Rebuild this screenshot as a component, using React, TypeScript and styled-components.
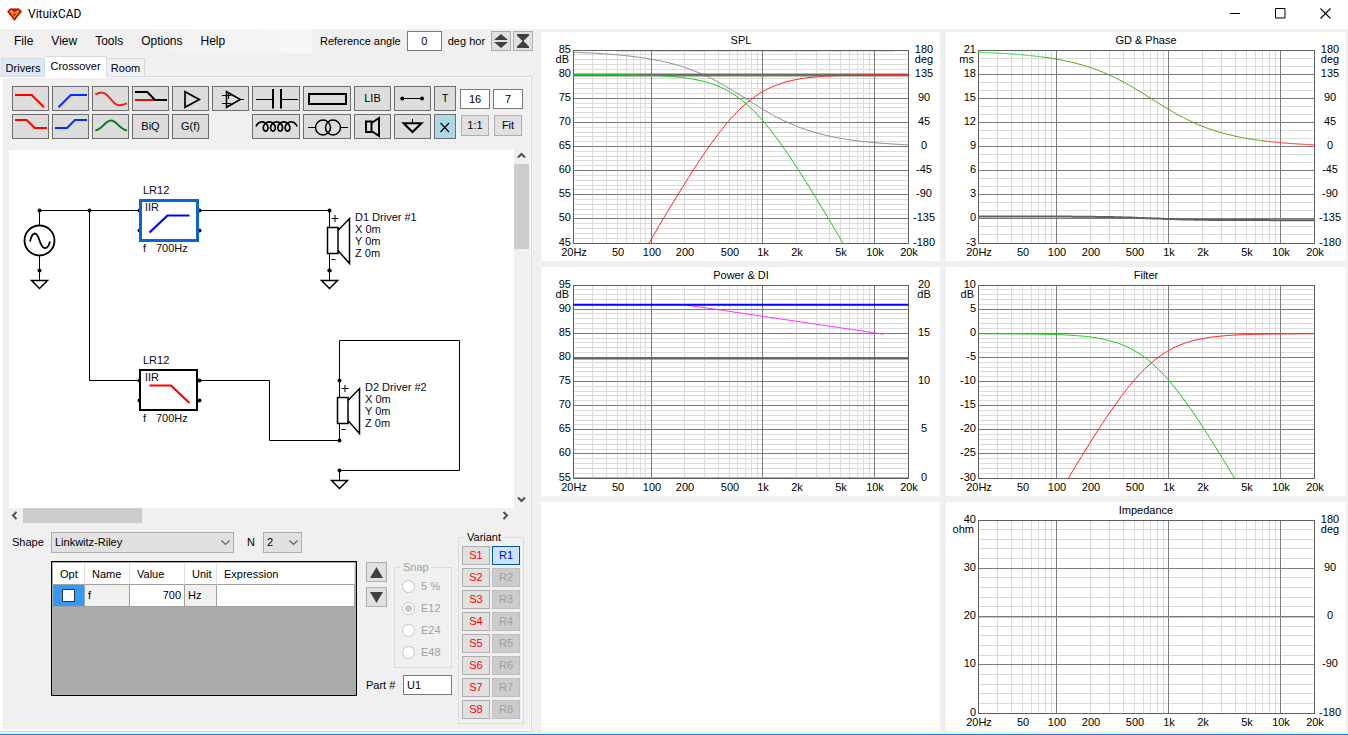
import React, { useLayoutEffect, useRef, useState } from "react";
import styled, { createGlobalStyle, css } from "styled-components";

const GlobalStyle = createGlobalStyle`
  *, *::before, *::after { box-sizing: border-box; }
  body {
    margin: 0;
    background: #f0f0f0;
    color: #000;
    font: 11px/13px "Liberation Sans", Arial, sans-serif;
  }
  button, input, select { font: inherit; color: inherit; margin: 0; }
`;

/* ---------- window frame ---------- */

const Window = styled.div`
  display: flex;
  flex-direction: column;
  height: 100vh;
  min-height: 720px;
  border-bottom: 1px solid #1979ca;
`;

const TitleBar = styled.header`
  display: flex;
  align-items: center;
  flex: none;
  height: 29px;
  padding-left: 7px;
  background: #fff;
`;

const Title = styled.h1`
  flex: 1;
  margin: 0;
  padding: 0 0 2px 6px;
  font: 400 12px/16px Roboto, sans-serif;
`;

const WindowButton = styled.button`
  display: grid;
  place-items: center;
  width: 45px;
  height: 29px;
  padding: 0 0 3px;
  border: 0;
  background: none;
`;

const Body = styled.main`
  display: flex;
  flex: 1;
  min-height: 0;
`;

const Editor = styled.section`
  display: flex;
  flex-direction: column;
  flex: none;
  width: 541px;
  padding: 0 9px 2px 0;
`;

const TopRow = styled.div`
  display: flex;
  align-items: center;
  height: 24px;
`;

const Menu = styled.nav`
  display: flex;
  align-items: center;
  flex: none;
  width: 312px;
  height: 24px;
  padding-left: 5px;
  background: linear-gradient(90deg, #f0f0f0, #f1f1f1 45%, #f7f7f7);
`;

const MenuItem = styled.button`
  padding: 0 9px;
  border: 0;
  background: none;
  font-size: 12px;
  line-height: 16px;
`;

const AngleGroup = styled.div`
  display: flex;
  align-items: center;
  gap: 6px;
  flex: 1;
  padding-left: 8px;
  white-space: nowrap;
`;

const AngleButtons = styled.div`
  display: flex;
  gap: 2px;
  margin-left: auto;
`;

const TextBox = styled.input<{ $w: number; $center?: boolean }>`
  flex: none;
  width: ${(p) => p.$w}px;
  height: 20px;
  padding: 0 3px;
  border: 1px solid #7a7a7a;
  border-radius: 0;
  background: #fff;
  text-align: ${(p) => (p.$center ? "center" : "left")};
`;

const PlainButton = styled.button<{ $w?: number; $h?: number }>`
  display: grid;
  place-items: center;
  width: ${(p) => p.$w ?? 20}px;
  height: ${(p) => p.$h ?? 20}px;
  padding: 0;
  border: 1px solid #adadad;
  background: #e1e1e1;
`;

/* ---------- tabs ---------- */

const Tabs = styled.div`
  display: flex;
  align-items: flex-end;
  height: 23px;
  padding-left: 1px;
`;

const Tab = styled.button<{ $w: number; $active?: boolean; $hot?: boolean }>`
  width: ${(p) => p.$w}px;
  height: 18px;
  padding: 2px 0 0;
  border: 1px solid #d9d9d9;
  border-bottom: 0;
  background: ${(p) => (p.$hot ? "#d8eaf9" : "#f0f0f0")};
  & + & { border-left: 0; }
  ${(p) =>
    p.$active &&
    css`
      height: 21px;
      padding: 0 0 1px;
      margin-bottom: -1px;
      background: #fff;
      z-index: 1;
    `}
`;

const TabPage = styled.div`
  display: flex;
  flex: 1;
  min-height: 0;
  border: 1px solid #dcdcdc;
  border-left: 0;
  padding: 1px 1px 2px 3px;
  background: #fff;
`;

const TabBody = styled.div`
  display: flex;
  flex-direction: column;
  flex: 1;
  min-width: 0;
  padding: 8px 0 5px;
  background: #f0f0f0;
`;

/* ---------- toolbar ---------- */

const Toolbar = styled.div`
  display: flex;
  gap: 3px;
  padding-left: 9px;
`;

const ToolGrid = styled.div`
  display: grid;
  grid-template-columns: repeat(6, 37px) 48px 48px 37px 37px 22px;
  grid-template-rows: 25px 25px;
  gap: 3px;
`;

const ToolButton = styled.button<{ $on?: boolean }>`
  display: grid;
  place-items: center;
  padding: 0;
  border: 1px solid #6e6e6e;
  background: ${(p) => (p.$on ? "#add8e6" : "#dddddd")};
`;

const ZoomGrid = styled.div`
  display: grid;
  grid-template-columns: 30px 30px;
  gap: 6px 3px;
  justify-items: center;
  align-content: start;
  padding: 3px 0 0 1px;
`;

const Svg: React.FC<{ w: number; h?: number; children: React.ReactNode }> = ({ w, h = 23, children }) => (
  <svg width={w} height={h} viewBox={`0 0 ${w} ${h}`} fill="none" stroke="#000" strokeWidth="2" aria-hidden="true">
    {children}
  </svg>
);

const coil = Array.from({ length: 137 }, (_, i) => {
  const t = -Math.PI / 2 + (i / 136) * 9 * Math.PI;
  return `${(9 + 1.16 * t + 4 * Math.sin(t)).toFixed(2)},${(11.5 - 4.6 * Math.cos(t)).toFixed(2)}`;
}).join(" ");

const tools: { name: string; icon: React.ReactNode; on?: boolean; blank?: boolean }[] = [
  { name: "Low pass", icon: <Svg w={35}><path d="M2 8H18.7L31 20.3" stroke="#f00" /></Svg> },
  { name: "High pass", icon: <Svg w={35}><path d="M5.5 20.3L17.7 8H34" stroke="#0030ff" /></Svg> },
  { name: "Shelf", icon: <Svg w={35}><path d="M2.3 7.6C7 4.5 11 5 14 8C18 12 21 17.5 25 18.2C28 18.6 31 17.6 34 16.4" stroke="#f02020" /></Svg> },
  { name: "Shelving low", icon: <Svg w={35}><path d="M2 13H22" stroke="#f00" /><path d="M2 5H14.3L22 13H34" /></Svg> },
  { name: "Buffer", icon: <Svg w={35}><path d="M12 4.7V20.3L26.3 12.5Z" strokeWidth="1.7" /></Svg> },
  { name: "Op-amp", icon: <Svg w={35}><path d="M13.5 4.7V20.3L27.3 12.5Z" strokeWidth="1.6" /><path d="M9 8.5H18M15.5 6V12M9 16.5H18M27 12.5H31" strokeWidth="1" /></Svg> },
  { name: "Capacitor", icon: <Svg w={46}><path d="M3 12.5H20M28 12.5H45" strokeWidth="1" /><path d="M20 2V21.5M28 2V21.5" /></Svg> },
  { name: "Resistor", icon: <Svg w={46}><path d="M5 7H42V17H5Z" /></Svg> },
  { name: "Library", icon: "LIB" },
  { name: "Wire", icon: <Svg w={35}><path d="M7 11.5H27" strokeWidth="1" /><circle cx="7.3" cy="11.5" r="2" fill="#000" stroke="none" /><circle cx="27" cy="11.5" r="2" fill="#000" stroke="none" /></Svg> },
  { name: "Text", icon: "T" },
  { name: "Step low", icon: <Svg w={35}><path d="M2 5H13.7L21.7 13H34" stroke="#f00" /></Svg> },
  { name: "Step high", icon: <Svg w={35}><path d="M2 13H14L22 5H34" stroke="#0030ff" /></Svg> },
  { name: "Peak", icon: <Svg w={35}><path d="M2.3 15.5C10 14 12 5.6 18 5.6S26 14 34 15.5" stroke="#0a7a1e" /></Svg> },
  { name: "Biquad", icon: "BiQ" },
  { name: "Transfer function", icon: "G(f)" },
  { name: "", icon: null, blank: true },
  { name: "Inductor", icon: <Svg w={46}><polyline points={coil} strokeWidth="1.7" /></Svg> },
  { name: "Transformer", icon: <Svg w={46}><circle cx="19" cy="12.5" r="7.5" strokeWidth="1.5" /><circle cx="29" cy="12.5" r="7.5" strokeWidth="1.5" /><path d="M4 12.5H11.5M36.5 12.5H44" strokeWidth="1" /></Svg> },
  { name: "Driver", icon: <Svg w={35}><path d="M11 6.5H16.5V17H11ZM16.5 8L24 3V21L16.5 16" /></Svg> },
  { name: "Ground", icon: <Svg w={35}><path d="M17.5 4V8" strokeWidth="1" /><path d="M8.5 8.2H26.5L17.5 17Z" /></Svg> },
  { name: "Delete", icon: <Svg w={20}><path d="M5.5 8L14 17M14 8L5.5 17" strokeWidth="1.1" /></Svg>, on: true },
];

/* ---------- schematic ---------- */

const CanvasArea = styled.div`
  display: grid;
  grid-template-columns: minmax(0, 1fr) 16px;
  grid-template-rows: minmax(0, 1fr) 16px;
  flex: 1;
  min-height: 0;
  padding: 8px 0 0 3px;
`;

const Canvas = styled.div`
  margin: 3px 0 0 3px;
  overflow: hidden;
  background: #fff;
`;

const VBar = styled.div`
  display: flex;
  flex-direction: column;
  width: 15px;
`;

const HBar = styled.div`
  display: flex;
  height: 15px;
`;

const ArrowButton = styled.button`
  display: grid;
  place-items: center;
  flex: none;
  width: 17px;
  height: 17px;
  padding: 0;
  border: 0;
  background: none;
  ${VBar} & { width: 15px; }
  ${HBar} & { height: 15px; }
`;

const Track = styled.div`
  display: flex;
  flex: 1;
`;

const Thumb = styled.div<{ $vertical?: boolean }>`
  background: #cdcdcd;
  width: ${(p) => (p.$vertical ? "15px" : "25%")};
  height: ${(p) => (p.$vertical ? "26%" : "15px")};
`;

const Chevron: React.FC<{ dir: "up" | "down" | "left" | "right"; thin?: boolean }> = ({ dir, thin }) => {
  const turn = { down: 0, left: 90, up: 180, right: 270 }[dir];
  return (
    <svg width="11" height="11" viewBox="-5.5 -5.5 11 11" fill="none" stroke={thin ? "#606060" : "#505050"} strokeWidth={thin ? 1.2 : 2} aria-hidden="true">
      <path d={thin ? "M-4 -2L0 2L4 -2" : "M-3.5 -2L0 1.5L3.5 -2"} transform={`rotate(${turn})`} />
    </svg>
  );
};

const SchematicText = styled.text`
  font: 11px "Liberation Sans", Arial, sans-serif;
  fill: #0a0a14;
  stroke: none;
`;

const Dot: React.FC<{ x: number; y: number }> = ({ x, y }) => <circle cx={x} cy={y} r="2" fill="#000" stroke="none" />;

const Ground: React.FC<{ x: number; y: number }> = ({ x, y }) => (
  <g transform={`translate(${x} ${y})`}>
    <path d="M0 0V10" />
    <path d="M-8 10H8L0 18Z" strokeWidth="1.5" fill="#fff" />
    <Dot x={0} y={0} />
  </g>
);

const Speaker: React.FC<{ x: number; y: number; label: string }> = ({ x, y, label }) => (
  <g transform={`translate(${x} ${y})`}>
    <path d="M0 0V17M0 43V60" />
    <path d="M-2 17H8.5V43H-2ZM8.5 20L20 8V53L8.5 40" strokeWidth="1.5" fill="#fff" />
    <path d="M2 8H9M5.500 4.500V11.500M2 49H6" />
    <Dot x={0} y={0} />
    <Dot x={0} y={60} />
    {[label, "X 0m", "Y 0m", "Z 0m"].map((t, i) => (
      <SchematicText key={t} x={25.5} y={10.5 + i * 12}>{t}</SchematicText>
    ))}
  </g>
);

const FilterBlock: React.FC<{ y: number; selected?: boolean; curve: string; color: string }> = ({ y, selected, curve, color }) => (
  <g transform={`translate(130 ${y})`}>
    {[0, 20].map((p) => (
      <g key={p}>
        <Dot x={0} y={p} />
        <Dot x={60} y={p} />
      </g>
    ))}
    <rect x={selected ? 1 : 0.5} y={selected ? -10 : -10.5} width="57" height="40" fill="#fff" stroke={selected ? "#0a66cc" : "#000"} strokeWidth={selected ? 3 : 2} />
    <path d={curve} stroke={color} strokeWidth="2.2" />
    <SchematicText x={3.5} y={-16.5}>LR12</SchematicText>
    <SchematicText x={5.5} y={0.5}>IIR</SchematicText>
    <SchematicText x={3.5} y={41.5}>f</SchematicText>
    <SchematicText x={16.5} y={41.5}>700Hz</SchematicText>
  </g>
);

const Schematic = () => (
  <svg width="505" height="358" fill="none" stroke="#000" role="img" aria-label="Crossover schematic">
    <g transform="translate(.5 .5)">
      <path d="M30 75V60H130M80 60V230H130M190 60H320M190 230H260V290H330M330 230V190H450V320H330M30 105V120" />
      <circle cx="30" cy="90" r="15" strokeWidth="1.8" />
      <path d="M20.5 91C23 80.5 27 80.5 30 90S38 100.5 40.5 91" strokeWidth="1.8" />
      <Dot x={30} y={60} />
      <Dot x={80} y={60} />
      <FilterBlock y={60} selected curve="M10 22L28 5H50" color="#0000ff" />
      <FilterBlock y={230} curve="M10 5H31.5L50 22.5" color="#ff0000" />
      <Speaker x={320} y={60} label="D1 Driver #1" />
      <Speaker x={330} y={230} label="D2 Driver #2" />
      <Ground x={30} y={120} />
      <Ground x={320} y={120} />
      <Ground x={330} y={320} />
    </g>
  </svg>
);

/* ---------- part parameters ---------- */

const Lower = styled.div`
  display: flex;
  align-items: flex-start;
  flex: none;
  padding-left: 9px;
`;

const ParamBlock = styled.div`
  display: flex;
  flex-direction: column;
  gap: 8px;
  padding-top: 8px;
`;

const ShapeRow = styled.div`
  display: flex;
  align-items: center;
`;

const FieldLabel = styled.label<{ $w: number; $indent?: number }>`
  flex: none;
  width: ${(p) => p.$w}px;
  padding-left: ${(p) => p.$indent ?? 0}px;
`;

const SelectWrap = styled.div<{ $w: number }>`
  position: relative;
  width: ${(p) => p.$w}px;
  svg {
    position: absolute;
    top: 5px;
    right: 3px;
    pointer-events: none;
  }
`;

const Select = styled.select`
  appearance: none;
  display: block;
  width: 100%;
  height: 21px;
  padding: 0 3px;
  border: 1px solid #adadad;
  border-radius: 0;
  background: #e1e1e1;
`;

const GridBox = styled.div`
  width: 306px;
  height: 135px;
  margin-left: 39px;
  padding: 1px;
  border: 1px solid #000;
  background: #ababab;
`;

const ParamTable = styled.table`
  width: 100%;
  table-layout: fixed;
  border-collapse: separate;
  border-spacing: 0;
  th, td {
    height: 22px;
    padding: 0 3px;
    border-right: 1px solid #a0a0a0;
    border-bottom: 1px solid #a0a0a0;
    background: #fff;
    font-weight: 400;
    text-align: left;
  }
  th { padding: 2px 0 0 7px; border-right-color: #e0e0e0; }
`;

const Cell = styled.td<{ $kind?: "check" | "fixed" | "number" }>`
  && {
    ${(p) => p.$kind === "check" && "background: #3399ff; text-align: center; line-height: 0;"}
    ${(p) => p.$kind === "fixed" && "background: #f0f0f0;"}
    ${(p) => p.$kind === "number" && "text-align: right;"}
  }
`;

const CheckBox = styled.input`
  appearance: none;
  width: 13px;
  height: 13px;
  border: 1px solid #333;
  background: #fff;
`;

const MiddleBlock = styled.div`
  width: 86px;
  margin: 37px 6px 0 9px;
`;

const MiddleRow = styled.div`
  display: flex;
  justify-content: space-between;
  align-items: flex-start;
`;

const ArrowColumn = styled.div`
  display: grid;
  gap: 5px;
  padding-top: 1px;
`;

const Group = styled.fieldset<{ $w: number }>`
  width: ${(p) => p.$w}px;
  min-width: 0;
  margin: 0;
  padding: 0 3px 4px;
  border: 1px solid #dcdcdc;
  legend { margin-left: 3px; padding: 0 2px; }
  &:disabled { color: #a0a0a0; }
`;

const RadioLabel = styled.label`
  display: flex;
  align-items: center;
  gap: 6px;
  height: 22px;
  padding-left: 4px;
`;

const Radio = styled.input`
  appearance: none;
  flex: none;
  width: 13px;
  height: 13px;
  border: 1px solid #c4c4c4;
  border-radius: 50%;
  background: #fff;
  &:checked { background: radial-gradient(circle, #c8c8c8 3px, #fff 4px); }
`;

const SnapList = styled.div`
  padding-top: 1px;
`;

const PartRow = styled.div`
  display: flex;
  align-items: center;
  margin-top: 7px;
`;

const VariantBlock = styled.div`
  padding-top: 7px;
`;

const VariantGrid = styled.div`
  display: grid;
  grid-template-columns: 28px 28px;
  gap: 3px 2px;
  padding-top: 2px;
`;

const VariantButton = styled.button<{ $tone: "save" | "current" | "off" }>`
  height: 19px;
  padding: 0;
  border: 1px solid;
  line-height: 15px;
  ${(p) =>
    ({
      save: "color: #ff0000; background: #e1e1e1; border-color: #adadad;",
      current: "color: #0000ff; background: #cce4f7; border-color: #005499;",
      off: "color: #a0a0a0; background: #cccccc; border-color: #bfbfbf;",
    })[p.$tone]}
`;

/* ---------- charts ---------- */

const ChartGrid = styled.section`
  display: grid;
  grid-template-columns: minmax(0, 399fr) minmax(0, 400fr);
  grid-template-rows: repeat(3, minmax(0, 1fr));
  gap: 6px;
  flex: 1;
  min-width: 0;
  padding: 3px 2px 3px 0;
`;

const ChartPanel = styled.div`
  overflow: hidden;
  background: #fff;
`;

const ChartText = styled.text`
  font: 11px "Liberation Sans", Arial, sans-serif;
  fill: #000;
`;

type Axis = { max: number; min: number; step: number; unit: string; minor?: number };
type Curve = {
  fn: (f: number) => number;
  color: string;
  width?: number;
  right?: boolean;
  from?: number;
  to?: number;
  opacity?: number;
};
type ChartSpec = { title: string; left: Axis; right?: Axis; curves: Curve[] };

const FC = 700;
const lowPass = (f: number) => -20 * Math.log10(1 + (f / FC) ** 2);
const highPass = (f: number) => lowPass(f) + 40 * Math.log10(f / FC);
const phase = (f: number) => 180 - (360 / Math.PI) * Math.atan(f / FC);

const degrees = (step: number): Axis => ({ max: 180, min: -180, step, unit: "deg" });

const charts: (ChartSpec | null)[] = [
  {
    title: "SPL",
    left: { max: 85, min: 45, step: 5, minor: 1, unit: "dB" },
    right: degrees(45),
    curves: [
      { fn: () => 84.8, color: "#ff60e0", from: 50, to: 15000, opacity: 0.3 },
      { fn: phase, color: "#8c8c8c", right: true },
      { fn: () => 79.9, color: "#5f6b55", width: 3, opacity: 0.9 },
      { fn: (f) => 80 + lowPass(f), color: "#10d010" },
      { fn: (f) => 80 + highPass(f), color: "#ff2020" },
    ],
  },
  {
    title: "GD & Phase",
    left: { max: 21, min: -3, step: 3, minor: 1, unit: "ms" },
    right: degrees(45),
    curves: [
      { fn: (f) => 0.455 / (1 + (f / FC) ** 2) - 0.1, color: "#606060", width: 2 },
      { fn: phase, color: "#ff1010", right: true, from: 7000 },
      { fn: phase, color: "#10d020", right: true, to: 75 },
      { fn: phase, color: "#50a010", right: true, from: 75, to: 7000 },
    ],
  },
  {
    title: "Power & DI",
    left: { max: 95, min: 55, step: 5, minor: 1, unit: "dB" },
    right: { max: 20, min: 0, step: 5, unit: "dB" },
    curves: [
      { fn: () => 79.9, color: "#606060", width: 2 },
      { fn: () => 55.2, color: "#ff8080" },
      { fn: (f) => 91 - (6.1 * Math.log10(f / 200)) / Math.log10(60), color: "#ff20ff", from: 200, to: 12000 },
      { fn: () => 91, color: "#0000ff", width: 2 },
    ],
  },
  {
    title: "Filter",
    left: { max: 10, min: -30, step: 5, minor: 1, unit: "dB" },
    curves: [
      { fn: lowPass, color: "#10d010" },
      { fn: highPass, color: "#ff2020" },
    ],
  },
  null,
  {
    title: "Impedance",
    left: { max: 40, min: 0, step: 10, minor: 2, unit: "ohm" },
    right: degrees(90),
    curves: [{ fn: () => 19.9, color: "#b08c8c", opacity: 0.6 }],
  },
];

const freqLabels: [number, string][] = [
  [20, "20Hz"], [50, "50"], [100, "100"], [200, "200"], [500, "500"],
  [1000, "1k"], [2000, "2k"], [5000, "5k"], [10000, "10k"], [20000, "20k"],
];

const freqLines = [10, 100, 1000, 10000]
  .flatMap((d) => [1, 2, 3, 4, 5, 6, 7, 8, 9].map((n) => n * d))
  .filter((f) => f > 20 && f < 20000);

const ticks = (a: Axis, step: number) =>
  Array.from({ length: Math.round((a.max - a.min) / step) + 1 }, (_, i) => a.max - i * step);

const ChartDrawing: React.FC<{ spec: ChartSpec; w: number; h: number; id: string }> = ({ spec, w, h, id }) => {
  const x0 = 32;
  const x1 = w - 32;
  const y0 = 18;
  const y1 = h - 18;
  const x = (f: number) => x0 + ((x1 - x0) * Math.log10(f / 20)) / 3;
  const y = (v: number, a: Axis) => y0 + ((y1 - y0) * (a.max - v)) / (a.max - a.min);
  const crisp = (v: number) => Math.floor(v + 0.01) + 0.5;
  const { left, right } = spec;
  const isMajor = (f: number) => [100, 1000, 10000].includes(f);

  return (
    <svg width={w} height={h} display="block" role="img" aria-label={spec.title}>
      <clipPath id={id}>
        <rect x={x0} y={y0} width={x1 - x0 + 1} height={y1 - y0 + 1} />
      </clipPath>
      <g fill="none" stroke="#dcdcdc">
        {ticks(left, left.minor ?? left.step).map((v) => (
          <path key={v} d={`M${x0} ${crisp(y(v, left))}H${x1}`} />
        ))}
        {freqLines.filter((f) => !isMajor(f)).map((f) => (
          <path key={f} d={`M${crisp(x(f))} ${y0}V${y1}`} />
        ))}
      </g>
      <g fill="none" stroke="#7c7c7c">
        {ticks(left, left.step).map((v) => (
          <path key={v} d={`M${x0} ${crisp(y(v, left))}H${x1}`} />
        ))}
        {freqLines.filter(isMajor).map((f) => (
          <path key={f} d={`M${crisp(x(f))} ${y0}V${y1}`} />
        ))}
        <rect x={x0 + 0.5} y={y0 + 0.5} width={x1 - x0} height={y1 - y0} stroke="#606060" />
      </g>
      <g clipPath={`url(#${id})`} fill="none">
        {spec.curves.map((c, i) => {
          const a = c.right && right ? right : left;
          const from = c.from ?? 20;
          const to = c.to ?? 20000;
          const points = Array.from({ length: 161 }, (_, k) => {
            const f = from * (to / from) ** (k / 160);
            return `${(x(f) + 0.5).toFixed(1)},${(y(c.fn(f), a) + 0.5).toFixed(1)}`;
          }).join(" ");
          return <polyline key={i} points={points} stroke={c.color} strokeWidth={c.width ?? 1} opacity={c.opacity} />;
        })}
      </g>
      <ChartText x={Math.round(w / 2)} y={12} textAnchor="middle">{spec.title}</ChartText>
      {ticks(left, left.step).map((v) => (
        <ChartText key={v} x={x0 - 2} y={Math.floor(y(v, left)) + 3} textAnchor="end">{v}</ChartText>
      ))}
      <ChartText x={x0 - 4} y={y0 + 13} textAnchor="end">{left.unit}</ChartText>
      {right && (
        <g textAnchor="middle">
          {ticks(right, right.step).map((v) => (
            <ChartText key={v} x={x1 + 16} y={Math.floor(y(v, right)) + 3}>{v}</ChartText>
          ))}
          <ChartText x={x1 + 16} y={y0 + 13}>{right.unit}</ChartText>
        </g>
      )}
      <g textAnchor="middle">
        {freqLabels.map(([f, t]) => (
          <ChartText key={f} x={Math.floor(x(f)) + 1} y={y1 + 13}>{t}</ChartText>
        ))}
      </g>
    </svg>
  );
};

const Chart: React.FC<{ spec: ChartSpec | null; id: string }> = ({ spec, id }) => {
  const ref = useRef<HTMLDivElement>(null);
  const [size, setSize] = useState({ w: 0, h: 0 });

  useLayoutEffect(() => {
    const el = ref.current;
    if (!el) return;
    const measure = () => setSize({ w: el.clientWidth, h: el.clientHeight });
    measure();
    const observer = new ResizeObserver(measure);
    observer.observe(el);
    return () => observer.disconnect();
  }, []);

  return <ChartPanel ref={ref}>{spec && size.w > 80 && <ChartDrawing spec={spec} w={size.w} h={size.h} id={id} />}</ChartPanel>;
};

/* ---------- page ---------- */

const variants = [1, 2, 3, 4, 5, 6, 7, 8];

export default function App() {
  return (
    <Window>
      <GlobalStyle />
      <TitleBar>
        <svg width="15" height="13" viewBox="0 0 15 13" aria-hidden="true">
          <path d="M3 .8H12L14.700 3.500L7.500 12.500L.3 3.500Z" fill="#cc1010" stroke="#8c1010" strokeWidth=".6" />
          <path d="M2.500 3L4.500 2L7.500 4.500L10.500 2L12.500 3L7.500 10Z" fill="#f8a820" />
          <path d="M5 4.500L7.500 6L10 4.500L7.500 8.500Z" fill="#cc1010" />
        </svg>
        <Title>VituixCAD</Title>
        <WindowButton aria-label="Minimize"><Svg w={11} h={11}><path d="M0 5.5H10" strokeWidth="1" /></Svg></WindowButton>
        <WindowButton aria-label="Maximize"><Svg w={11} h={11}><path d="M.5 .5H10V10H.5Z" strokeWidth="1" /></Svg></WindowButton>
        <WindowButton aria-label="Close"><Svg w={11} h={11}><path d="M.5 .5L10.5 10.5M10.5 .5L.5 10.5" strokeWidth="1.1" /></Svg></WindowButton>
      </TitleBar>

      <Body>
        <Editor>
          <TopRow>
            <Menu>
              {["File", "View", "Tools", "Options", "Help"].map((m) => <MenuItem key={m}>{m}</MenuItem>)}
            </Menu>
            <AngleGroup>
              <label htmlFor="angle">Reference angle</label>
              <TextBox id="angle" $w={35} $center defaultValue="0" />
              <span>deg hor</span>
              <AngleButtons>
                <PlainButton aria-label="Step angle">
                  <Svg w={14} h={14}><path d="M0 6L7 0L14 6ZM0 8L7 14L14 8Z" fill="#404040" stroke="none" /></Svg>
                </PlainButton>
                <PlainButton aria-label="Reset angle">
                  <Svg w={14} h={14}><path d="M1 0H13V1.5L7.5 7L13 12.5V14H1V12.5L6.5 7L1 1.5Z" fill="#404040" stroke="none" /></Svg>
                </PlainButton>
              </AngleButtons>
            </AngleGroup>
          </TopRow>

          <Tabs role="tablist">
            <Tab role="tab" $w={44} $hot>Drivers</Tab>
            <Tab role="tab" $w={62} $active aria-selected="true">Crossover</Tab>
            <Tab role="tab" $w={38}>Room</Tab>
          </Tabs>

          <TabPage>
            <TabBody>
              <Toolbar>
                <ToolGrid>
                  {tools.map((t, i) =>
                    t.blank ? <span key={i} /> : <ToolButton key={i} aria-label={t.name} $on={t.on}>{t.icon}</ToolButton>
                  )}
                </ToolGrid>
                <ZoomGrid>
                  <TextBox $w={30} $center defaultValue="16" aria-label="Grid width" />
                  <TextBox $w={30} $center defaultValue="7" aria-label="Grid height" />
                  <PlainButton $w={28} $h={21}>1:1</PlainButton>
                  <PlainButton $w={28} $h={21}>Fit</PlainButton>
                </ZoomGrid>
              </Toolbar>

              <CanvasArea>
                <Canvas><Schematic /></Canvas>
                <VBar>
                  <ArrowButton aria-label="Scroll up"><Chevron dir="up" /></ArrowButton>
                  <Track><Thumb $vertical /></Track>
                  <ArrowButton aria-label="Scroll down"><Chevron dir="down" /></ArrowButton>
                </VBar>
                <HBar>
                  <ArrowButton aria-label="Scroll left"><Chevron dir="left" /></ArrowButton>
                  <Track><Thumb /></Track>
                  <ArrowButton aria-label="Scroll right"><Chevron dir="right" /></ArrowButton>
                </HBar>
              </CanvasArea>

              <Lower>
                <ParamBlock>
                  <ShapeRow>
                    <FieldLabel $w={39} htmlFor="shape">Shape</FieldLabel>
                    <SelectWrap $w={183}>
                      <Select id="shape"><option>Linkwitz-Riley</option></Select>
                      <Chevron dir="down" thin />
                    </SelectWrap>
                    <FieldLabel $w={29} $indent={13} htmlFor="order">N</FieldLabel>
                    <SelectWrap $w={39}>
                      <Select id="order"><option>2</option></Select>
                      <Chevron dir="down" thin />
                    </SelectWrap>
                  </ShapeRow>
                  <GridBox>
                    <ParamTable>
                      <colgroup>
                        <col width="32" /><col width="45" /><col width="55" /><col width="32" /><col />
                      </colgroup>
                      <thead>
                        <tr><th>Opt</th><th>Name</th><th>Value</th><th>Unit</th><th>Expression</th></tr>
                      </thead>
                      <tbody>
                        <tr>
                          <Cell $kind="check"><CheckBox type="checkbox" aria-label="Optimize f" /></Cell>
                          <Cell $kind="fixed">f</Cell>
                          <Cell $kind="number">700</Cell>
                          <Cell $kind="fixed">Hz</Cell>
                          <Cell />
                        </tr>
                      </tbody>
                    </ParamTable>
                  </GridBox>
                </ParamBlock>

                <MiddleBlock>
                  <MiddleRow>
                    <ArrowColumn>
                      <PlainButton $w={21} aria-label="Increase value">
                        <Svg w={13} h={11}><path d="M0 11L6.5 0L13 11Z" fill="#404040" stroke="none" /></Svg>
                      </PlainButton>
                      <PlainButton $w={21} aria-label="Decrease value">
                        <Svg w={13} h={11}><path d="M0 0L6.5 11L13 0Z" fill="#404040" stroke="none" /></Svg>
                      </PlainButton>
                    </ArrowColumn>
                    <Group $w={58} disabled>
                      <legend>Snap</legend>
                      <SnapList>
                        {["5 %", "E12", "E24", "E48"].map((s) => (
                          <RadioLabel key={s}>
                            <Radio type="radio" name="snap" defaultChecked={s === "E12"} />
                            {s}
                          </RadioLabel>
                        ))}
                      </SnapList>
                    </Group>
                  </MiddleRow>
                  <PartRow>
                    <FieldLabel $w={37} htmlFor="part">Part #</FieldLabel>
                    <TextBox id="part" $w={49} defaultValue="U1" />
                  </PartRow>
                </MiddleBlock>

                <VariantBlock>
                  <Group $w={66}>
                    <legend>Variant</legend>
                    <VariantGrid>
                      {variants.map((n) => (
                        <React.Fragment key={n}>
                          <VariantButton $tone="save">S{n}</VariantButton>
                          <VariantButton $tone={n === 1 ? "current" : "off"} disabled={n > 1}>R{n}</VariantButton>
                        </React.Fragment>
                      ))}
                    </VariantGrid>
                  </Group>
                </VariantBlock>
              </Lower>
            </TabBody>
          </TabPage>
        </Editor>

        <ChartGrid>
          {charts.map((c, i) => <Chart key={i} spec={c} id={`plot-${i}`} />)}
        </ChartGrid>
      </Body>
    </Window>
  );
}
